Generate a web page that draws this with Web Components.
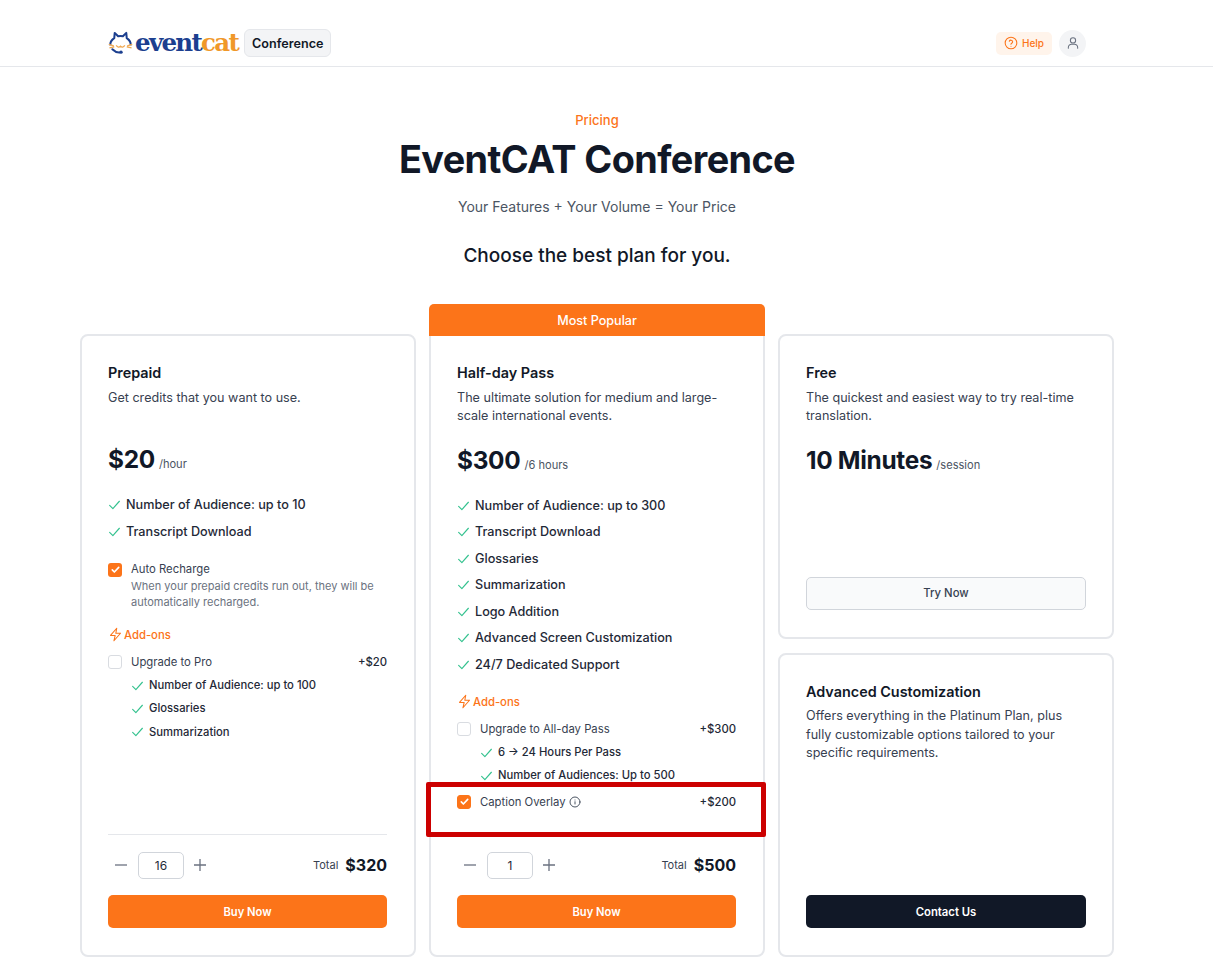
<!DOCTYPE html>
<html><head><meta charset="utf-8"><title>EventCAT Conference Pricing</title>
<style>
html,body{margin:0;background:#fff}
body{font-family:Inter,"Liberation Sans",sans-serif;color:#111827;height:961px;overflow:hidden}
</style></head><body>
<ec-header></ec-header>
<ec-hero></ec-hero>
<ec-plans>
  <ec-card>
    <ec-plan-head name="Prepaid" desc="Get credits that you want to use." price="$20" unit="/hour"></ec-plan-head>
    <ec-features><ec-check>Number of Audience: up to 10</ec-check><ec-check>Transcript Download</ec-check></ec-features>
    <ec-recharge></ec-recharge>
    <ec-addons-title style="margin-top:16.500px"></ec-addons-title>
    <ec-addon label="Upgrade to Pro" price="+$20"></ec-addon>
    <ec-sublist><ec-check small>Number of Audience: up to 100</ec-check><ec-check small>Glossaries</ec-check><ec-check small>Summarization</ec-check></ec-sublist>
    <ec-buy qty="16" total="$320" divider></ec-buy>
  </ec-card>
  <ec-card popular>
    <ec-plan-head name="Half-day Pass" desc="The ultimate solution for medium and large-scale international events." price="$300" unit="/6 hours"></ec-plan-head>
    <ec-features><ec-check>Number of Audience: up to 300</ec-check><ec-check>Transcript Download</ec-check><ec-check>Glossaries</ec-check><ec-check>Summarization</ec-check><ec-check>Logo Addition</ec-check><ec-check>Advanced Screen Customization</ec-check><ec-check>24/7 Dedicated Support</ec-check></ec-features>
    <ec-addons-title style="margin-top:16px"></ec-addons-title>
    <ec-addon label="Upgrade to All-day Pass" price="+$300"></ec-addon>
    <ec-sublist><ec-check small>6 → 24 Hours Per Pass</ec-check><ec-check small>Number of Audiences: Up to 500</ec-check></ec-sublist>
    <ec-addon label="Caption Overlay" price="+$200" checked info style="margin-top:6.500px"></ec-addon>
    <ec-buy qty="1" total="$500"></ec-buy>
    <ec-highlight></ec-highlight>
  </ec-card>
  <ec-side>
    <ec-card style="padding-right:26px">
      <ec-plan-head name="Free" desc="The quickest and easiest way to try real-time translation." price="10 Minutes" unit="/session"></ec-plan-head>
      <ec-action kind="light">Try Now</ec-action>
    </ec-card>
    <ec-card style="padding-right:26px">
      <ec-plan-head name="Advanced Customization" desc="Offers everything in the Platinum Plan, plus fully customizable options tailored to your specific requirements." noprice></ec-plan-head>
      <ec-action kind="dark">Contact Us</ec-action>
    </ec-card>
  </ec-side>
</ec-plans>
<script>
const ORANGE='#fc7419';
const def=(name,html)=>{
  customElements.define(name,class extends HTMLElement{
    connectedCallback(){
      if(this.shadowRoot)return;
      const r=this.attachShadow({mode:'open'});
      r.innerHTML=typeof html==='function'?html(this):html;
    }
  });
};
const check=(s)=>`<svg width="${s}" height="${s}" viewBox="0 0 24 24" fill="none" stroke="#34c28f" stroke-width="2.100" stroke-linecap="round" stroke-linejoin="round" style="flex:none"><path d="M3 13.500 9 19.500 21 6"/></svg>`;
const tick=`<svg width="11" height="11" viewBox="0 0 24 24" fill="none" stroke="#fff" stroke-width="3.600" stroke-linecap="round" stroke-linejoin="round"><path d="M5 13l4.500 4.500L19 7.500"/></svg>`;
const bolt=`<svg width="15" height="15" viewBox="0 0 24 24" fill="none" stroke="${ORANGE}" stroke-width="1.700" stroke-linecap="round" stroke-linejoin="round" style="flex:none"><path d="M14 2 4 13.500h7.500L9.500 22 20 10h-7.500L14 2z"/></svg>`;

def('ec-header',`<style>
:host{display:flex;align-items:center;justify-content:space-between;box-sizing:border-box;height:67px;border-bottom:1px solid #e5e7eb;padding:20px 127px 0 108px;width:1213px}
.l{display:flex;align-items:center}
.logo{display:flex;align-items:center;gap:2px}
.word{font-family:"DejaVu Serif",serif;font-weight:700;font-size:24.500px;letter-spacing:-1.700px;color:#1c3f8f;line-height:1}
.word b{color:#f0982a;font-weight:700}
.tag{margin-left:6px;height:28px;box-sizing:border-box;padding:0 7px;display:flex;align-items:center;background:#f3f4f6;border:1px solid #e5e7eb;border-radius:6px;font-size:12.600px;font-weight:600;color:#111827}
.r{display:flex;align-items:center;gap:7px}
.help{display:flex;align-items:center;gap:4px;height:23px;padding:0 8px;background:#fff4eb;border-radius:5px;color:${ORANGE};font-size:10px;font-weight:500}
.user{width:27px;height:27px;border-radius:50%;background:#f3f4f6;display:flex;align-items:center;justify-content:center}
</style>
<div class="l"><div class="logo">
<svg width="25" height="24" viewBox="0 0 26 24" fill="none">
<path d="M2.500 14.500C2 11.500 3.500 9 6.500 7L7 1.500 10.500 5Q13 4.400 15.500 5L19 1.500 19.500 7C22.500 9 24 11.500 23.500 14.500" stroke="#1c3f8f" stroke-width="2.100" stroke-linejoin="round"/>
<path d="M.8 13.500 6 15M1.500 17 6.500 16M25.200 13.500 20 15M24.500 17 19.500 16" stroke="#f0a850" stroke-width="1.400"/>
<path d="M8.500 14.500Q10.800 17.500 13 15.300 15.200 17.500 17.500 14.500" stroke="#f0a850" stroke-width="1.400"/>
<path d="M4.500 18.500Q8 22 12 21.800" stroke="#1c3f8f" stroke-width="2.100" stroke-linecap="round"/>
<circle cx="13.500" cy="21.500" r="1.800" fill="#1c3f8f"/>
</svg>
<span class="word">event<b>cat</b></span></div><span class="tag">Conference</span></div>
<div class="r"><div class="help"><svg width="14" height="14" viewBox="0 0 24 24" fill="none" stroke="${ORANGE}" stroke-width="1.800" stroke-linecap="round" stroke-linejoin="round"><circle cx="12" cy="12" r="10"/><path d="M9.100 9a3 3 0 0 1 5.800 1c0 2-3 2.600-3 4"/><path d="M12 17.500h.01"/></svg>Help</div>
<div class="user"><svg width="14" height="14" viewBox="0 0 24 24" fill="none" stroke="#6b7280" stroke-width="1.800" stroke-linecap="round" stroke-linejoin="round"><circle cx="12" cy="7.500" r="4.500"/><path d="M4 21v-1.500A5.500 5.500 0 0 1 9.500 14h5a5.500 5.500 0 0 1 5.500 5.500V21"/></svg></div></div>`);

def('ec-hero',`<style>
:host{display:flex;flex-direction:column;align-items:center;width:1034px;margin-left:80px;text-align:center}
.k{margin-top:45px;color:${ORANGE};font-size:13px;font-weight:500;line-height:16px}
h1{margin:8px 0 0;font-size:37.800px;font-weight:700;line-height:46px;letter-spacing:-.6px;color:#111827}
.s{margin-top:15px;font-size:14px;line-height:20px;color:#4b5563}
h2{margin:25px 0 0;font-size:19px;font-weight:450;line-height:28px;color:#111827}
</style><div class="k">Pricing</div><h1>EventCAT Conference</h1><div class="s">Your Features + Your Volume = Your Price</div><h2>Choose the best plan for you.</h2>`);

def('ec-plans',`<style>:host{display:grid;grid-template-columns:repeat(3,336px);column-gap:13px;margin:64px 0 0 80px;width:1034px;height:623px;align-items:stretch}</style><slot></slot>`);
def('ec-side',`<style>:host{display:grid;grid-template-rows:1fr 1fr;row-gap:14px;min-height:0}</style><slot></slot>`);

def('ec-card',h=>`<style>
:host{display:flex;flex-direction:column;position:relative;box-sizing:border-box;border:2px solid #e5e7eb;border-radius:8px;padding:26px 27px 27px 26px;background:#fff;min-height:0}
:host([popular]){border-top-left-radius:0;border-top-right-radius:0}
.ban{position:absolute;left:-2px;right:-2px;top:-32px;height:32px;background:${ORANGE};color:#fff;font-size:12.600px;font-weight:500;display:flex;align-items:center;justify-content:center;border-radius:5px 5px 0 0}
</style>${h.hasAttribute('popular')?'<div class="ban">Most Popular</div>':''}<slot></slot>`);

def('ec-highlight',`<style>:host{position:absolute;left:-5px;top:446px;width:340px;height:55px;box-sizing:border-box;border:5px solid #cc0000;border-radius:2px;pointer-events:none}</style>`);

def('ec-plan-head',h=>`<style>
:host{display:block}
.n{font-size:14.400px;font-weight:600;line-height:22px;color:#111827}
.d{margin-top:4.500px;font-size:12.600px;line-height:18.500px;color:#374151;min-height:36.500px}
.p{margin-top:19.400px;display:flex;align-items:baseline;gap:4px;height:38px}
.v{font-size:24.400px;font-weight:700;letter-spacing:-.3px;color:#111827}
.u{font-size:11.100px;color:#4b5563}
</style><div class="n">${h.getAttribute('name')}</div><div class="d">${h.getAttribute('desc')}</div>${h.hasAttribute('noprice')?'':`<div class="p"><span class="v">${h.getAttribute('price')}</span><span class="u">${h.getAttribute('unit')}</span></div>`}`);

def('ec-features',`<style>:host{display:flex;flex-direction:column;margin-top:9px}</style><slot></slot>`);
def('ec-check',h=>{const sm=h.hasAttribute('small');return `<style>
:host{display:flex;align-items:center;gap:5px;height:${sm?23.300:26.500}px;font-size:${sm?11.250:12.650}px;font-weight:500;color:#1f2937;white-space:nowrap}
</style>${check(13)}<slot></slot>`});

def('ec-recharge',`<style>
:host{display:flex;gap:9px;margin-top:17px}
.box{width:14px;height:14px;flex:none;margin-top:1.500px;border-radius:3px;background:${ORANGE};display:flex;align-items:center;justify-content:center}
.t{font-size:11.300px;line-height:16.500px;color:#374151}
.d{font-size:11px;line-height:16px;color:#6b7280}
</style><div class="box">${tick}</div><div><div class="t">Auto Recharge</div><div class="d">When your prepaid credits run out, they will be automatically recharged.</div></div>`);

def('ec-addons-title',`<style>:host{display:flex;align-items:center;gap:1px;color:${ORANGE};font-size:11.300px;font-weight:500;height:17px}</style>${bolt}Add-ons`);

def('ec-addon',h=>`<style>
:host{display:flex;align-items:center;margin-top:10px;height:17px;font-size:11.300px;color:#374151}
.box{width:12px;height:12px;border-radius:3px;margin-right:9px;flex:none;display:flex;align-items:center;justify-content:center;border:1px solid #d9dce1;background:#fff}
.box.on{background:${ORANGE};border-color:${ORANGE}}
.p{margin-left:auto;color:#1f2937;font-weight:500}
svg.i{margin-left:3px}
</style><div class="box ${h.hasAttribute('checked')?'on':''}">${h.hasAttribute('checked')?tick:''}</div><span>${h.getAttribute('label')}</span>${h.hasAttribute('info')?`<svg class="i" width="12" height="12" viewBox="0 0 24 24" fill="none" stroke="#4b5563" stroke-width="2" stroke-linecap="round"><circle cx="12" cy="12" r="10"/><path d="M12 16v-4.500M12 8h.01"/></svg>`:''}<span class="p">${h.getAttribute('price')}</span>`);

def('ec-sublist',`<style>:host{display:flex;flex-direction:column;padding-left:23px;margin-top:3px}</style><slot></slot>`);

def('ec-buy',h=>`<style>
:host{display:block;margin-top:auto}
.bar{display:flex;align-items:center;padding:16.500px 0 16.500px;${h.hasAttribute('divider')?'border-top:1px solid #e5e7eb;':'border-top:1px solid transparent;'}}
.q{width:46px;height:27px;box-sizing:border-box;border:1px solid #d1d5db;border-radius:5px;font-size:12px;display:flex;align-items:center;justify-content:center;margin:0 9px 0 4px;color:#1f2937}
.op{display:flex;width:26px;justify-content:center}
.t{margin-left:auto;font-size:11px;color:#374151}
.v{margin-left:7px;font-size:16px;font-weight:700;color:#111827}
.b{height:33px;border-radius:5px;background:${ORANGE};color:#fff;font-size:11.200px;font-weight:600;display:flex;align-items:center;justify-content:center}
</style><div class="bar"><span class="op"><svg width="14" height="14" viewBox="0 0 14 14" stroke="#6b7280" stroke-width="1.300" fill="none"><path d="M1 7h12"/></svg></span><div class="q">${h.getAttribute('qty')}</div><span class="op" style="width:14px"><svg width="14" height="14" viewBox="0 0 14 14" stroke="#6b7280" stroke-width="1.300" fill="none"><path d="M1 7h12M7 1v12"/></svg></span><span class="t">Total</span><span class="v">${h.getAttribute('total')}</span></div><div class="b">Buy Now</div>`);

def('ec-action',h=>{const dark=h.getAttribute('kind')==='dark';return `<style>
:host{display:flex;margin-top:auto;height:33px;align-items:center;justify-content:center;box-sizing:border-box;border-radius:5px;font-size:11.300px;font-weight:${dark?600:500};${dark?'background:#111827;color:#fff':'background:#f9fafb;color:#374151;border:1px solid #d1d5db'}}
</style><slot></slot>`});
</script>
</body></html>
